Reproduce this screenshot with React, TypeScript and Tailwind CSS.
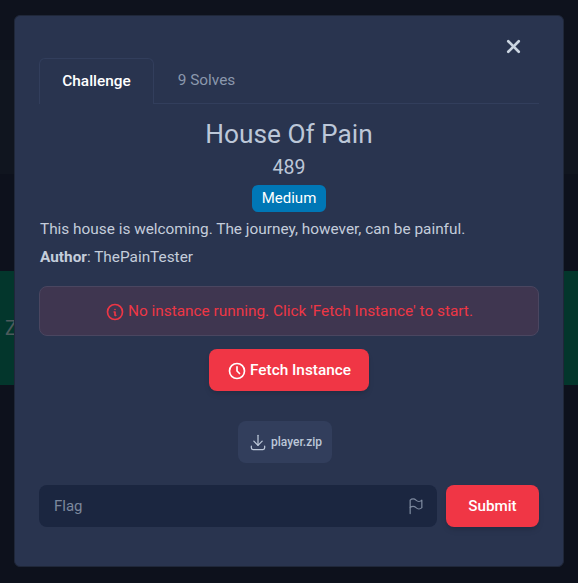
import { X } from "lucide-react";
import { TbInfoCircle, TbClock, TbDownload, TbFlag } from "react-icons/tb";

export default function App() {
  return (
    <div className="relative h-[583px] w-[578px] overflow-hidden bg-[#0d111c] font-['Roboto',sans-serif]">
      {/* dimmed page behind the modal */}
      <div className="flex h-full flex-col">
        <div className="h-[60px] bg-[#0e121d]" />
        <div className="h-[114px] bg-[#10151f]" />
        <div className="h-[97px]" />
        <div className="flex h-[114px] items-center bg-[#03362c] pl-[5px] text-xl text-[#4d5a5c]">Z</div>
      </div>

      <div className="absolute left-[14px] top-[15px] flex h-[552px] w-[550px] flex-col rounded-md border border-[#1f2739] bg-[#29344f] px-6 pt-[42px]">
        <button className="absolute right-[39px] top-[20px] text-[#cbd5e1]">
          <X size={21} strokeWidth={3} />
        </button>

        <div className="flex h-[46px] border-b border-[#323e5c]">
          <div className="flex h-[46px] w-[115px] items-center justify-center rounded-t-md border border-b-0 border-[#323e5c] bg-[#29344f] text-[15.36px] font-medium text-white">
            Challenge
          </div>
          <div className="flex w-[105px] items-center justify-center pt-px text-[15.36px] text-[#8b98ad]">9 Solves</div>
        </div>

        <h3 className="mt-[14px] text-center text-[26.25px] leading-[32px] font-normal text-[#bcc7d8]">House Of Pain</h3>
        <div className="mt-[5px] text-center text-[19.5px] leading-[26px] text-[#bcc7d8]">489</div>
        <div className="mt-[4px] flex justify-center">
          <span className="rounded-md bg-[#0077b6] px-[9.5px] py-[3px] text-[15px] leading-[21px] text-white">Medium</span>
        </div>
        <p className="mt-[6px] pl-px text-[15.36px] leading-[22px] text-[#c4cddb]">
          This house is welcoming. The journey, however, can be painful.
        </p>
        <p className="mt-[7px] pl-px text-[15.36px] leading-[21px] text-[#c4cddb]">
          <strong className="font-bold">Author</strong>: ThePainTester
        </p>

        <div className="mt-[18px] flex h-[50px] items-center justify-center gap-[3px] rounded-lg border border-[#4a4660] bg-[#3f3650] pt-px text-[15.36px] text-[#ee3645]">
          <TbInfoCircle size={20} />
          <span>No instance running. Click 'Fetch Instance' to start.</span>
        </div>

        <div className="mt-[13px] flex justify-center">
          <button className="flex h-[42px] w-[160px] items-center justify-center gap-[3px] rounded-lg bg-[#f03645] pt-px text-[15.36px] font-medium text-white shadow-md">
            <TbClock size={20} />
            Fetch Instance
          </button>
        </div>

        <div className="mt-[30px] flex justify-center pr-[8px]">
          <button className="flex h-[42px] w-[94px] items-center justify-center gap-[3px] rounded-lg bg-[#323e5c] text-xs font-medium text-[#bcc7d8]">
            <TbDownload size={20} strokeWidth={1.5} />
            player.zip
          </button>
        </div>

        <div className="mt-[22px] flex gap-[9px]">
          <div className="flex h-[42px] flex-1 items-center justify-between rounded-lg bg-[#1b2640] pl-[15px] pr-[11px] text-[15px] text-[#7c889d]">
            <span>Flag</span>
            <TbFlag size={20} strokeWidth={1.5} />
          </div>
          <button className="h-[42px] w-[93px] rounded-lg bg-[#f03645] text-[15.2px] font-medium text-white shadow-md">Submit</button>
        </div>
      </div>
    </div>
  );
}
